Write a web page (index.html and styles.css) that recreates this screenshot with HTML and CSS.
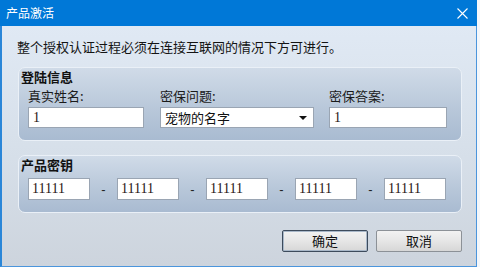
FILE: index.html
```html
<!DOCTYPE html>
<html lang="zh-CN">
<head>
<meta charset="utf-8">
<title>产品激活</title>
<link rel="stylesheet" href="styles.css">
</head>
<body>
<div class="window">
  <div class="titlebar">
    <span class="title">产品激活</span>
    <svg class="close" width="11" height="11" viewBox="0 0 11 11"><path d="M0.5 0.5 L10.5 10.5 M10.5 0.5 L0.5 10.5" stroke="#fff" stroke-width="1.1" fill="none"/></svg>
  </div>
  <div class="content">
    <p class="msg">整个授权认证过程必须在连接互联网的情况下方可进行。</p>
    <section class="group">
      <h2 class="group-title">登陆信息</h2>
      <div class="fields">
        <div class="field f-name">
          <span class="label">真实姓名:</span>
          <div class="input">1</div>
        </div>
        <div class="field f-question">
          <span class="label">密保问题:</span>
          <div class="input select"><span class="select-text">宠物的名字</span><span class="arrow"></span></div>
        </div>
        <div class="field f-answer">
          <span class="label">密保答案:</span>
          <div class="input">1</div>
        </div>
      </div>
    </section>
    <section class="group group-key">
      <h2 class="group-title">产品密钥</h2>
      <div class="keys">
        <div class="input key">11111</div>
        <span class="dash">-</span>
        <div class="input key">11111</div>
        <span class="dash">-</span>
        <div class="input key">11111</div>
        <span class="dash">-</span>
        <div class="input key">11111</div>
        <span class="dash">-</span>
        <div class="input key">11111</div>
      </div>
    </section>
    <div class="buttons">
      <button class="btn btn-default">确定</button>
      <button class="btn">取消</button>
    </div>
  </div>
</div>
</body>
</html>
```

FILE: styles.css
```css
html, body {
  margin: 0;
  padding: 0;
  background: #f4f7fb;
}
body {
  font-family: "Noto Sans CJK SC", "Noto Sans", sans-serif;
  font-size: 13px;
  color: #111;
}
.window {
  width: 477px;
  height: 267px;
  box-sizing: border-box;
  border-left: 2px solid #2a86d8;
  border-right: 1px solid #4b95dc;
  border-bottom: 1px solid #4b95dc;
  display: flex;
  flex-direction: column;
}
.titlebar {
  height: 26px;
  flex: none;
  background: #0078d7;
  display: flex;
  align-items: center;
  justify-content: space-between;
  padding: 0 9px 0 6px;
  margin-left: -2px;
  margin-right: -1px;
}
.title {
  color: #fff;
  font-size: 12px;
  line-height: 14px;
}
.close {
  display: block;
}
.content {
  flex: 1;
  background: linear-gradient(#e0e9f4, #d6dfe9 55%, #cdd4dd);
  padding: 13px 14px 0 15px;
}
.msg {
  margin: 0 0 12px 0;
  font-size: 13px;
  line-height: 16px;
  color: #141414;
}
.group {
  margin-left: 1px;
  border: 1px solid #eaf0f7;
  border-radius: 7px;
  background: linear-gradient(#d0dbe8, #b9c8da 55%, #a9bbd1);
  padding: 1px 0 12px 2px;
}
.group-key {
  margin-top: 14px;
}
.group-title {
  margin: 0;
  font-size: 13px;
  font-weight: bold;
  line-height: 16px;
  color: #111;
}
.fields {
  display: flex;
  margin-left: 7px;
  margin-top: 3px;
}
.field {
  display: flex;
  flex-direction: column;
  gap: 3px;
}
.label {
  font-size: 13px;
  line-height: 16px;
  color: #1a1a1a;
}
.f-name { width: 116px; }
.f-question { width: 154px; margin-left: 16px; }
.f-answer { width: 118px; margin-left: 15px; }
.input {
  box-sizing: border-box;
  height: 21px;
  background: #fff;
  border: 1px solid #9aa5b3;
  padding: 0 4px;
  font-family: "Liberation Serif", serif;
  font-size: 14px;
  line-height: 19px;
  color: #2a1414;
}
.select {
  display: flex;
  align-items: center;
  justify-content: space-between;
  padding: 0 6px 0 4px;
  font-family: "Noto Sans CJK SC", sans-serif;
  font-size: 13px;
  color: #111;
}
.select-text {
  line-height: 19px;
}
.arrow {
  width: 0;
  height: 0;
  border-left: 4px solid transparent;
  border-right: 4px solid transparent;
  border-top: 4px solid #111;
  margin-top: 1px;
}
.keys {
  display: flex;
  align-items: center;
  margin-left: 7px;
  margin-top: 5px;
}
.key {
  width: 62px;
  height: 22px;
  line-height: 20px;
  padding-left: 3px;
}
.dash {
  width: 27px;
  text-align: center;
  font-family: "Liberation Sans", sans-serif;
  font-size: 13px;
  color: #222;
}
.buttons {
  display: flex;
  justify-content: flex-end;
  gap: 8px;
  margin-top: 17px;
}
.btn {
  width: 86px;
  height: 22px;
  box-sizing: border-box;
  margin: 0;
  padding: 0;
  border: 1px solid #8c9197;
  border-radius: 2px;
  background: linear-gradient(#f2f2f2, #e6e6e6 50%, #d7d7d7);
  font-family: "Noto Sans CJK SC", sans-serif;
  font-size: 13px;
  line-height: 18px;
  color: #111;
}
.btn-default {
  border: 1px solid #3d4b5c;
  box-shadow: inset 0 0 0 1px #a9b8c9;
}
```
